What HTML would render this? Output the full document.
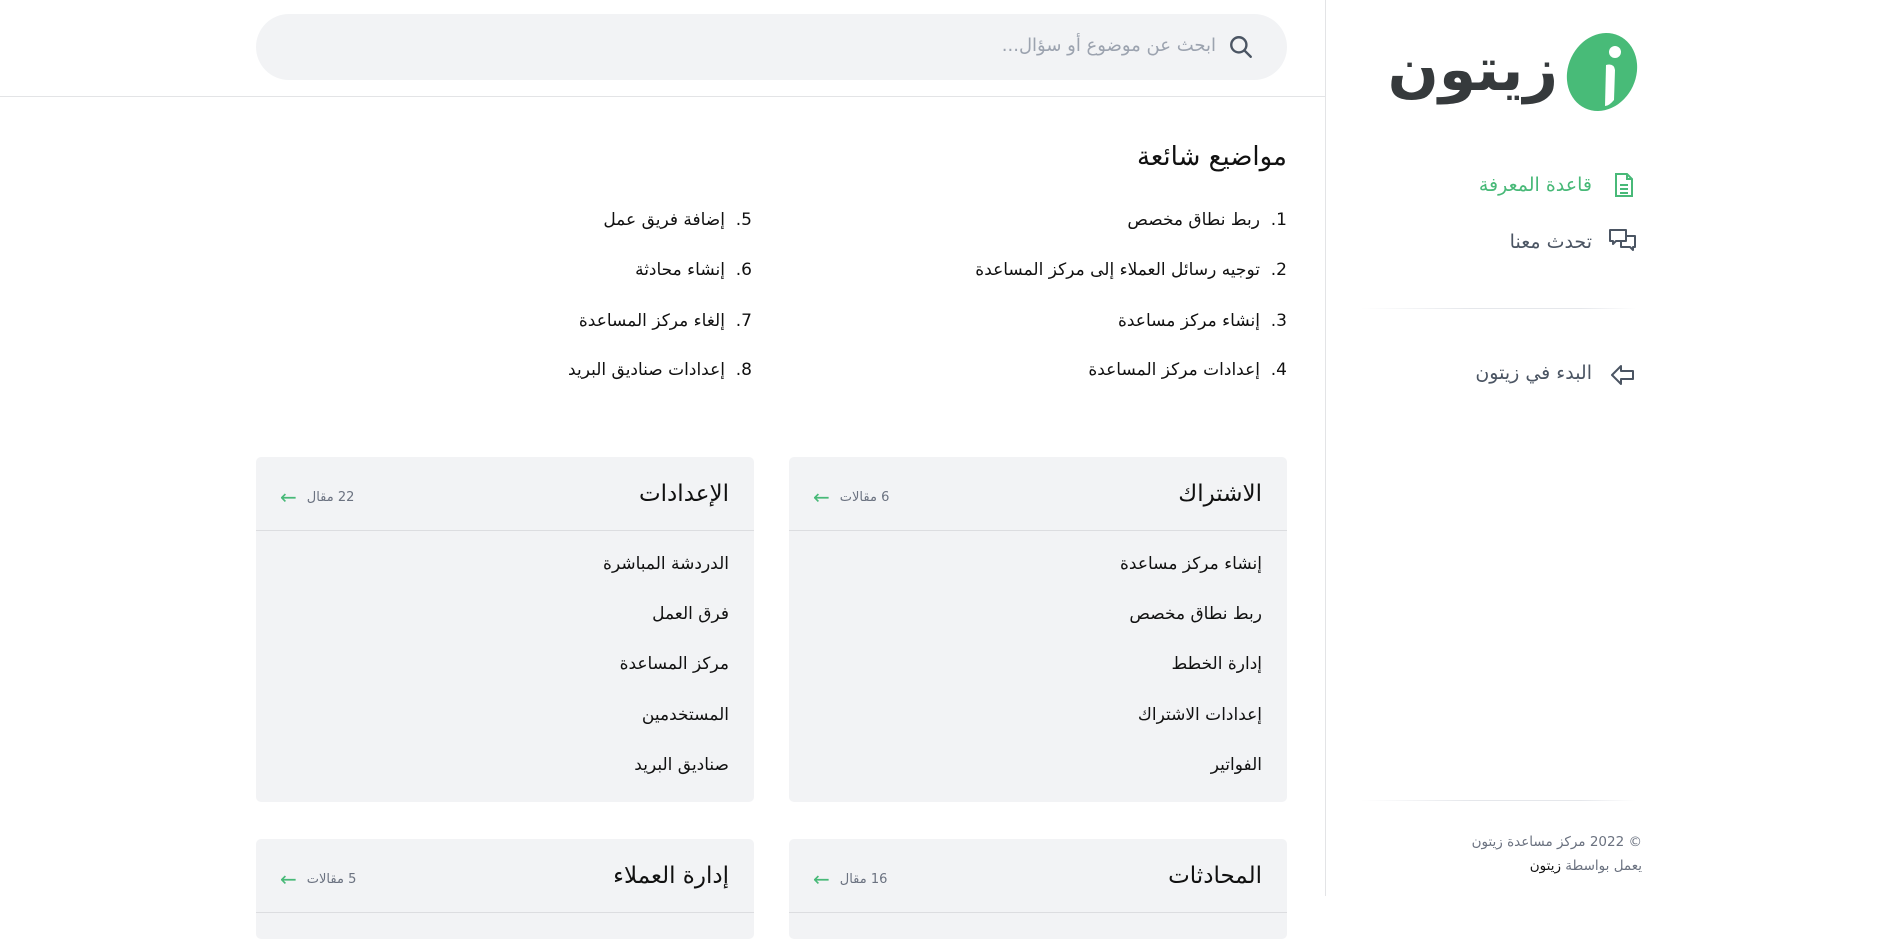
<!DOCTYPE html>
<html lang="ar" dir="rtl"><head><meta charset="utf-8">
<style>
*{margin:0;padding:0;box-sizing:border-box}
body{width:1884px;height:896px;overflow:hidden;background:#fff;font-family:"DejaVu Sans","Liberation Sans",sans-serif;color:#111;position:relative}
.a{position:absolute;white-space:nowrap}
.r{direction:rtl;text-align:right}
.card{position:absolute;background:#f2f3f5;border-radius:5px;width:498px}
.card .hd{height:74px;border-bottom:1px solid #dcdde0;position:relative}
.card .t{position:absolute;right:25px;top:24px;font-size:23px;color:#111}
.card .c{position:absolute;left:24px;top:28px;font-size:13px;color:#6b7280;display:flex;align-items:center;gap:10px;direction:ltr}
.card ul{list-style:none;padding:8px 25px 0 0}
.card li{font-size:17px;height:50.2px;line-height:50px;text-align:right}
.li{font-size:17px}
</style></head><body>
<div class="a" style="left:0;top:96px;width:1325px;height:1px;background:#e3e4e6"></div>
<div class="a" style="left:1325px;top:0;width:1px;height:896px;background:#e3e4e6"></div>
<div class="a" style="left:256px;top:14px;width:1031px;height:66px;border-radius:33px;background:#f2f3f5"></div>
<svg class="a" style="left:1228px;top:34px" width="26" height="26" viewBox="0 0 24 24" fill="none" stroke="#4b5563" stroke-width="2.2" stroke-linecap="round"><circle cx="10" cy="10" r="7"/><path d="M15.5 15.5L21 21"/></svg>
<div class="a r" style="right:668px;top:35px;font-size:18px;color:#9ca3af">ابحث عن موضوع أو سؤال...</div>
<div class="a r" style="right:326px;top:30px;font-size:60px;font-weight:bold;color:#363a3c;line-height:80px">زيتون</div>
<svg class="a" style="left:1556px;top:30px" width="90" height="84" viewBox="0 0 90 84"><ellipse cx="46" cy="42" rx="34" ry="40" transform="rotate(25 46 42)" fill="#48bb78"/><circle cx="59" cy="22" r="6" fill="#fff"/><path d="M50 35 Q58 33 59 40 L58 70 Q53 76 49 76 Z" fill="#fff"/></svg>
<div class="a r" style="right:292px;top:174px;font-size:19px;color:#48b978">قاعدة المعرفة</div>
<svg class="a" style="left:1612px;top:172px" width="24" height="26" viewBox="0 0 24 26" fill="none" stroke="#48b978" stroke-width="2"><path d="M4 2h11l5 5v17H4z"/><path d="M15 2v5h5M8 13h8M8 17h8M8 21h8"/></svg>
<div class="a r" style="right:292px;top:231px;font-size:19px;color:#4b5563">تحدث معنا</div>
<svg class="a" style="left:1608px;top:228px" width="30" height="26" viewBox="0 0 30 26" fill="none" stroke="#4b5563" stroke-width="2" stroke-linejoin="round"><path d="M2 2h16v11H8l-3 3v-3H2z"/><path d="M18 8h9v11h-2v3l-3-3h-9v-6"/></svg>
<div class="a" style="left:1360px;top:308px;width:276px;height:1px;background:linear-gradient(to right,#fff,#e5e7eb 40%,#e5e7eb 80%,#fff)"></div>
<div class="a r" style="right:292px;top:362px;font-size:19px;color:#4b5563">البدء في زيتون</div>
<svg class="a" style="left:1610px;top:362px" width="26" height="26" viewBox="0 0 26 26" fill="none" stroke="#4b5563" stroke-width="2" stroke-linejoin="round"><path d="M2 13l9-9v5h12v8H11v5z"/></svg>
<div class="a" style="left:1360px;top:800px;width:276px;height:1px;background:linear-gradient(to right,#fff,#e5e7eb 40%,#e5e7eb 80%,#fff)"></div>
<div class="a r" style="right:242px;top:834px;font-size:13.5px;color:#6b7280">© 2022 مركز مساعدة زيتون</div>
<div class="a r" style="right:242px;top:858px;font-size:13.5px;color:#6b7280">يعمل بواسطة <span style="color:#111">زيتون</span></div>
<div class="a r" style="right:597px;top:142px;font-size:26px;color:#111">مواضيع شائعة</div>
<div class="a r li" style="right:597px;top:210px">1.&nbsp; ربط نطاق مخصص</div>
<div class="a r li" style="right:597px;top:260px">2.&nbsp; توجيه رسائل العملاء إلى مركز المساعدة</div>
<div class="a r li" style="right:597px;top:311px">3.&nbsp; إنشاء مركز مساعدة</div>
<div class="a r li" style="right:597px;top:360px">4.&nbsp; إعدادات مركز المساعدة</div>
<div class="a r li" style="right:1132px;top:210px">5.&nbsp; إضافة فريق عمل</div>
<div class="a r li" style="right:1132px;top:260px">6.&nbsp; إنشاء محادثة</div>
<div class="a r li" style="right:1132px;top:311px">7.&nbsp; إلغاء مركز المساعدة</div>
<div class="a r li" style="right:1132px;top:360px">8.&nbsp; إعدادات صناديق البريد</div>
<div class="card" style="left:789px;top:457px;height:345px"><div class="hd"><div class="t">الاشتراك</div><div class="c"><span style="color:#48b978;font-size:20px">←</span><span dir="rtl">6 مقالات</span></div></div>
<ul><li>إنشاء مركز مساعدة</li><li>ربط نطاق مخصص</li><li>إدارة الخطط</li><li>إعدادات الاشتراك</li><li>الفواتير</li></ul></div>
<div class="card" style="left:256px;top:457px;height:345px"><div class="hd"><div class="t">الإعدادات</div><div class="c"><span style="color:#48b978;font-size:20px">←</span><span dir="rtl">22 مقال</span></div></div>
<ul><li>الدردشة المباشرة</li><li>فرق العمل</li><li>مركز المساعدة</li><li>المستخدمين</li><li>صناديق البريد</li></ul></div>
<div class="card" style="left:789px;top:839px;height:100px"><div class="hd"><div class="t">المحادثات</div><div class="c"><span style="color:#48b978;font-size:20px">←</span><span dir="rtl">16 مقال</span></div></div></div>
<div class="card" style="left:256px;top:839px;height:100px"><div class="hd"><div class="t">إدارة العملاء</div><div class="c"><span style="color:#48b978;font-size:20px">←</span><span dir="rtl">5 مقالات</span></div></div></div>
</body></html>
